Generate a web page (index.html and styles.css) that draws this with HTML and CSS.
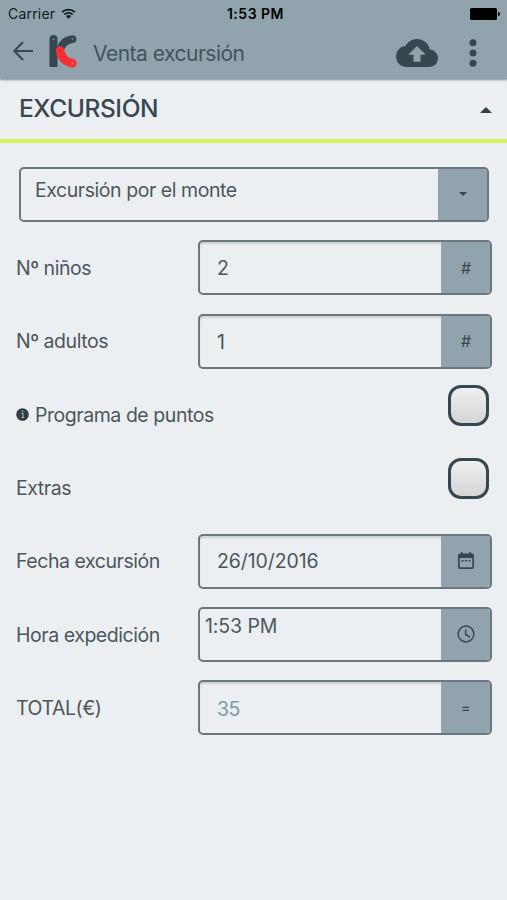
FILE: index.html
```html
<!DOCTYPE html>
<html lang="es">
<head>
<meta charset="utf-8">
<title>Venta excursión</title>
<link rel="stylesheet" href="styles.css">
</head>
<body>
<header class="header">
  <div class="status">
    <div class="carrier"><span>Carrier</span>
      <svg class="wifi" viewBox="0 0 16 12"><path d="M1 4.6a10 10 0 0 1 14 0M3.5 7.1a6.5 6.5 0 0 1 9 0" fill="none" stroke="#10181c" stroke-width="1.9"/><path d="M8 11.6 5.3 8.9a3.8 3.8 0 0 1 5.4 0z" fill="#10181c"/></svg>
    </div>
    <div class="time">1:53 PM</div>
    <svg class="battery" viewBox="0 0 30 12"><rect width="27" height="12" rx="1.5"/><path d="M28 4q2 0 2 2t-2 2z"/></svg>
  </div>
  <div class="toolbar">
    <svg class="back" viewBox="0 0 20 20"><path d="M20 10H1.5M10 1 1.3 10 10 19" fill="none" stroke="#37474f" stroke-width="2"/></svg>
    <svg class="logo" viewBox="0 0 28 33"><path d="M.5 4a4 4 0 0 1 8 0v28h-8z" fill="#37474f"/><path d="M11 15Q14 5 23.500 4.200" fill="none" stroke="#37474f" stroke-width="7.800" stroke-linecap="round"/><path d="M11 15.500Q13 26.500 23.500 28.300" fill="none" stroke="#fa2d33" stroke-width="8.500" stroke-linecap="round"/><g fill="#91a4ad"><circle cx="4.500" cy="4.500" r=".8"/><circle cx="23.500" cy="4" r=".8"/><circle cx="23.500" cy="28.500" r=".9"/></g><circle cx="11" cy="15.500" r=".9" fill="#a33"/></svg>
    <h1 class="title">Venta excursión</h1>
    <svg class="cloud" viewBox="0 4 24 16" preserveAspectRatio="none"><path fill="#37474f" d="M19.35 10.04C18.67 6.59 15.64 4 12 4 9.11 4 6.6 5.64 5.35 8.04 2.34 8.36 0 10.91 0 14c0 3.31 2.69 6 6 6h13c2.76 0 5-2.24 5-5 0-2.64-2.05-4.78-4.65-4.96zM14 13v4h-4v-4H7l5-5 5 5h-3z"/></svg>
    <svg class="more" viewBox="0 0 8 28"><g fill="#37474f"><circle cx="4" cy="3.7" r="3.5"/><circle cx="4" cy="14" r="3.5"/><circle cx="4" cy="24.3" r="3.5"/></g></svg>
  </div>
</header>
<section class="section">
  <h2 class="section-title">EXCURSIÓN</h2>
  <span class="arrow-up"></span>
</section>
<main class="form">
  <div class="field select"><span class="value">Excursión por el monte</span><span class="addon"><i class="arrow-down"></i></span></div>
  <div class="row"><label>Nº niños</label><div class="field"><span class="value">2</span><span class="addon hash">#</span></div></div>
  <div class="row"><label>Nº adultos</label><div class="field"><span class="value">1</span><span class="addon hash">#</span></div></div>
  <div class="row toggle"><label><svg class="info" viewBox="0 0 13 13"><circle cx="6.5" cy="6.5" r="6.3" fill="#2f3d44"/><path d="M5.300 5.500h1.700v4M5.300 9.500h2.800" stroke="#a5b2b8" stroke-width="1.100" fill="none"/><circle cx="6.500" cy="3.300" r=".9" fill="#a5b2b8"/></svg><span>Programa de puntos</span></label><span class="check"></span></div>
  <div class="row toggle"><label>Extras</label><span class="check"></span></div>
  <div class="row"><label>Fecha excursión</label><div class="field"><span class="value date">26/10/2016</span><span class="addon"><svg class="calendar" viewBox="0 0 18 19"><path fill-rule="evenodd" fill="#37474f" d="M4 1h1.6v1.5h6.8V1H14v1.5h1q2 0 2 2V16q0 2-2 2H3q-2 0-2-2V4.500q0-2 2-2h1zM2.700 7v9.300h12.600V7z"/><path d="M4.500 9.700h9" stroke="#37474f" stroke-width="1.500" stroke-dasharray="2 1.500"/></svg></span></div></div>
  <div class="row"><label>Hora expedición</label><div class="field hour"><span class="value">1:53 PM</span><span class="addon"><svg class="clock" viewBox="0 0 18 18"><g fill="none" stroke="#37474f" stroke-width="1.500"><circle cx="9" cy="9" r="7.900"/><path d="M8.700 4.500V9.500l4.200 2.500"/></g></svg></span></div></div>
  <div class="row"><label>TOTAL(€)</label><div class="field total"><span class="value">35</span><span class="addon">=</span></div></div>
</main>
</body>
</html>
```
FILE: styles.css
```css
* { box-sizing: border-box; }
body {
  margin: 0;
  min-height: 900px;
  background: #eceff1;
  color: #4b575d;
  font-family: Inter, "Liberation Sans", sans-serif;
  font-size: 19.500px;
  letter-spacing: -.45px;
}
svg { display: block; flex: none; }
.header { height: 79px; background: #91a4ad; box-shadow: 0 1px 2px #7d8d95; }
.status {
  display: grid;
  grid-template-columns: 1fr auto 1fr;
  align-items: center;
  height: 27px;
  padding: 0 7px 0 8px;
  color: #10181c;
  font-size: 14px;
  letter-spacing: .2px;
}
.carrier { display: flex; align-items: center; gap: 6px; }
.wifi { width: 15px; height: 11px; }
.time { margin-left: 3px; color: #000; font-weight: 600; font-size: 14px; letter-spacing: .5px; }
.battery { width: 30px; height: 12px; justify-self: end; }
.toolbar { display: flex; align-items: center; height: 52px; padding: 0 30px 0 13px; }
.back { width: 20px; height: 20px; margin-top: -4px; }
.logo { width: 28px; height: 33px; margin: -3px 0 0 16px; }
.title { margin: 1px auto 0 16px; color: #43535b; font-size: 21px; font-weight: 400; letter-spacing: -.5px; }
.cloud { width: 42px; height: 28px; margin-right: 31px; }
.more { width: 8px; height: 28px; }
.section {
  display: flex;
  align-items: center;
  justify-content: space-between;
  height: 64px;
  padding: 0 15px 2px 19px;
  border-bottom: 4px solid #d1f35f;
}
.section-title { margin: 0; color: #37474f; font-size: 24.500px; font-weight: 550; letter-spacing: -.4px; }
.arrow-up { border: 6px solid transparent; border-top: 0; border-bottom-color: #333f45; margin-top: 4px; }
.arrow-down { border: 4.500px solid transparent; border-bottom: 0; border-top-color: #37474f; margin-top: -2px; }
.form { display: grid; grid-auto-rows: 55px; gap: 18.350px; padding: 24px 15px 0 16px; }
.row { display: grid; grid-template-columns: 182px 1fr; }
label { display: flex; align-items: center; white-space: nowrap; }
.field {
  display: flex;
  overflow: hidden;
  border: 2px solid #6b777d;
  border-radius: 5px;
  box-shadow: inset 0 2px 2px #ccd1d4;
}
.value { flex: 1; align-self: center; padding: 1px 0 0 17px; }
.date { padding: 0 0 0 17px; letter-spacing: -.1px; }
.addon {
  display: flex;
  align-items: center;
  justify-content: center;
  width: 49px;
  background: #91a4ad;
  color: #37474f;
  font-size: 15px;
}
.hash { font-style: italic; font-size: 16px; }
.select { margin: 0 3px; box-shadow: none; }
.select .value { padding: 0 0 9px 14px; }
.hour { box-shadow: none; }
.hour .value { padding: 0 0 17px 5px; letter-spacing: -.1px; }
.total .value { padding-top: 3px; color: #7d9aab; }
.toggle { grid-template-columns: 1fr 41px; padding-right: 3px; }
.info { width: 13px; height: 13px; margin-right: 6px; }
.check {
  width: 41px;
  height: 41px;
  margin-top: -2px;
  border: 3px solid #37474f;
  border-radius: 13px;
  background: linear-gradient(#eeefef, #d4d5d6);
}
.calendar { width: 18px; height: 19px; margin-top: -2px; }
.clock { width: 18px; height: 18px; margin-top: -2px; }
```
